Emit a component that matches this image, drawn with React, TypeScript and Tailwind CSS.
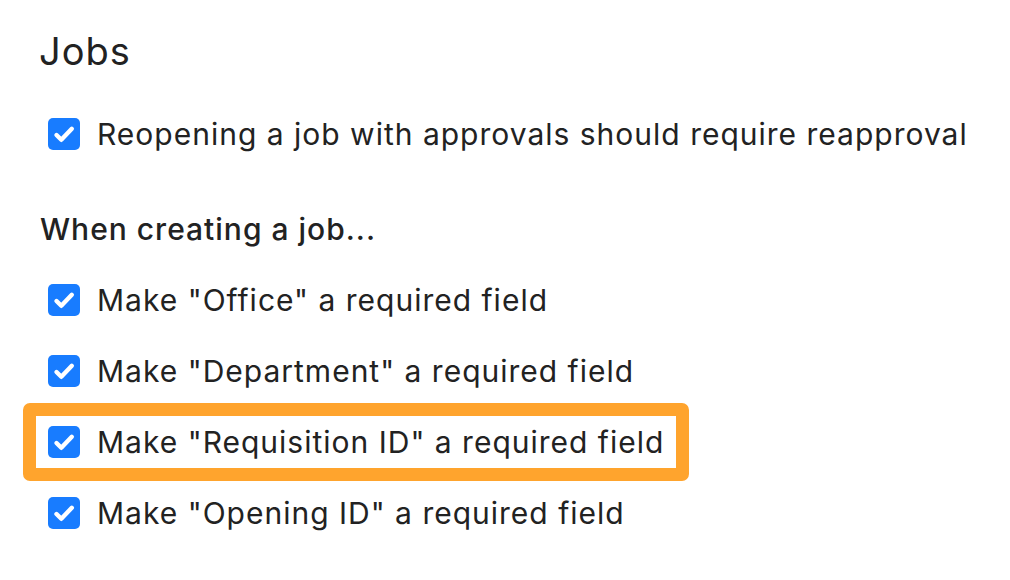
import React from "react";

const CheckIcon = () => (
  <span className="flex h-[32px] w-[32px] shrink-0 items-center justify-center rounded-[5px] bg-[#187cff]">
    <svg viewBox="0 0 32 32" width="32" height="32" className="block h-[32px] w-[32px]" fill="none" stroke="white" strokeWidth="4.4" strokeLinecap="round" strokeLinejoin="round">
      <path d="M8.5 17l4.8 4.8L23.8 10.8" />
    </svg>
  </span>
);

const Row = ({ label }: { label: string }) => (
  <div className="flex h-[71px] items-center gap-[17px] pl-[48px]">
    <CheckIcon />
    <span className="text-[30px] leading-none tracking-[1px] text-[#222]">{label}</span>
  </div>
);

const fields = ["Office", "Department", "Requisition ID", "Opening ID"];

export default function App() {
  return (
    <div className="h-[580px] w-[1010px] bg-white font-['Inter',sans-serif] text-[#222]">
      <h1 className="pl-[39px] pt-[28px] text-[38px] leading-[46px] tracking-[1px] font-normal">Jobs</h1>
      <div className="mt-[44px] flex items-center gap-[17px] pl-[48px]">
        <CheckIcon />
        <span className="text-[30px] leading-none tracking-[1px]">Reopening a job with approvals should require reapproval</span>
      </div>
      <h2 className="mt-[64px] pl-[40px] text-[30px] leading-none tracking-[1px] font-medium">When creating a job...</h2>
      <div className="mt-[20px]">
        {fields.map((f) =>
          f === "Requisition ID" ? (
            <div key={f} className="flex">
              <div className="ml-[23px] -my-[3.5px] flex h-[78px] items-center gap-[17px] rounded-[7px] border-[13px] border-[#ffa42d] px-[12px]">
                <CheckIcon />
                <span className="text-[30px] leading-none tracking-[1px]">Make "{f}" a required field</span>
              </div>
            </div>
          ) : (
            <Row key={f} label={`Make "${f}" a required field`} />
          )
        )}
      </div>
    </div>
  );
}
